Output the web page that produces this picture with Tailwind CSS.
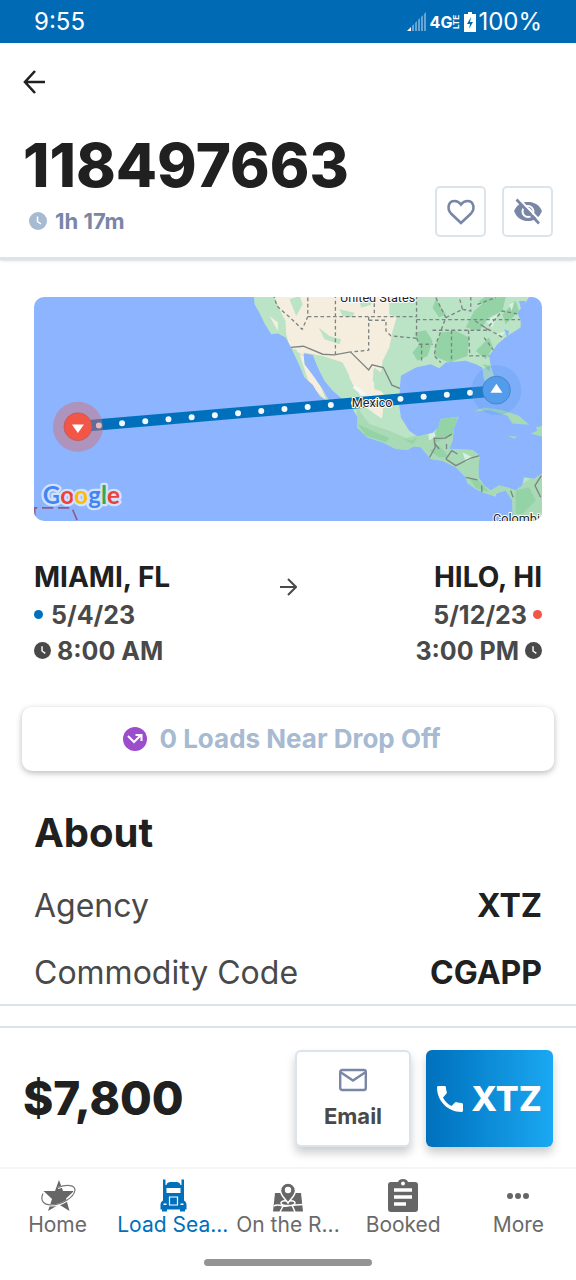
<!DOCTYPE html>
<html lang="en">
<head>
<meta charset="UTF-8" />
<meta name="viewport" content="width=device-width, initial-scale=1.0" />
<title>Load 118497663</title>
<script src="https://cdn.jsdelivr.net/npm/@tailwindcss/browser@4"></script>
</head>
<body class="flex min-h-screen flex-col bg-white font-['Inter',sans-serif] text-[#202020]">

<!-- Status bar -->
<div class="flex h-[43px] items-center justify-between bg-[#016ab5] px-[34px] text-white">
<span class="text-[24px]">9:55</span>
<div class="flex items-center">
<svg class="mr-1 h-5 w-[19px]" viewBox="0 0 19 20" fill="#fff">
<path d="M0 19 L4 15 V19Z" />
<path opacity=".4" d="M5 14l2-2v7H5zM8 11l2-2v10H8zM11 8l2-2v13h-2zM14 5l2-2v16h-2zM17 2l2-2v19h-2z" />
</svg>
<span class="text-base font-bold">4G</span>
<span class="rotate-180 text-[8px] leading-none font-bold [writing-mode:vertical-rl]">LTE</span>
<svg class="mr-[2px] ml-1 h-5 w-3" viewBox="0 0 12 20">
<path fill="#fff" d="M4 0h4v2h4v18H0V2h4z" />
<path fill="#016ab5" d="M7 5L3 12h3l-1 5 4-7H6z" />
</svg>
<span class="text-[24px]">100%</span>
</div>
</div>

<!-- Load header -->
<header class="border-b-3 border-[#dce4eb] px-[23px] pt-[26px] pb-5 shadow-sm">
<button class="block" aria-label="Back">
<svg class="h-[26px] w-[22px]" viewBox="0 0 22 26" fill="none" stroke="#202020" stroke-width="2.6"><path d="M12 2L2 13l10 11M2 13h20" /></svg>
</button>
<div class="flex items-end justify-between">
<div>
<h1 class="mt-[34px] text-[60px] leading-[72px] font-extrabold">118497663</h1>
<p class="mt-[6px] mb-[2px] flex items-center gap-2 pl-[6px] text-[22px] leading-7 font-bold text-[#7a86a5]">
<svg class="h-[18px] w-[18px]" viewBox="0 0 18 18"><circle cx="9" cy="9" r="9" fill="#a6bad1" /><path d="M8.500 4.500V9.500L12 12" fill="none" stroke="#fff" stroke-width="1.500" /></svg>
1h 17m
</p>
</div>
<div class="flex gap-4">
<button class="flex h-[51px] w-[51px] items-center justify-center rounded-[5px] border-2 border-[#dce4eb]" aria-label="Save load">
<svg class="h-[28px] w-[30px]" viewBox="0 0 30 28" fill="none" stroke="#7a86a5" stroke-width="2.600"><path d="M15 25L5 15.500C.5 10.500 2.500 3 8.500 3 11.500 3 13.500 4.500 15 6.500 16.500 4.500 18.500 3 21.500 3 27.500 3 29.500 10.500 25 15.500Z" /></svg>
</button>
<button class="flex h-[51px] w-[51px] items-center justify-center rounded-[5px] border-2 border-[#dce4eb]" aria-label="Hide load">
<svg class="h-[28px] w-[30px]" viewBox="0 0 30 28">
<path fill="#7a86a5" d="M1 13C4 6.500 9 4 15 4s11 2.500 14 9c-3 7.500-8 10-14 10S4 20.500 1 13Z" />
<circle cx="15" cy="13.500" r="5.500" fill="#7a86a5" stroke="#fff" stroke-width="2" />
<path d="M15 10.500a3.500 3.500 0 0 1 3.500 3.500" fill="none" stroke="#fff" stroke-width="1.200" />
<path d="M5.500.5L28.500 24" stroke="#fff" stroke-width="2" />
<path d="M3.500 1.500L26 25.500" stroke="#7a86a5" stroke-width="2.600" />
</svg>
</button>
</div>
</div>
</header>

<main class="flex-1 border-b-2 border-[#dce4eb] pt-[37px]">
<!-- Route map -->
<div class="mx-[34px] overflow-hidden rounded-[10px] bg-[#8cb4ff]">
<svg class="block w-full" viewBox="0 0 1527 672" role="img" aria-label="Route map">
<g transform="translate(768 -38)">
<clipPath id="land">
<path d="M-108 30L-105 60-88 90-75 118-55 150-35 148-12 160 0 180 12 205 30 245 45 280 70 302 92 338 120 352 100 315 75 280 45 240 42 207 70 212 85 250 105 290 130 320 165 350 190 375 205 400 203 430 235 460 280 475 320 495 355 497 375 487 395 490 425 525 460 530 500 550 530 580 535 598 560 615 580 625 620 638 622 628 650 620 670 650 672 720H780V568L757 570 735 585 705 580 700 605 680 620 660 612 630 605 605 620 585 605 568 580V545L572 515 550 498 480 495 490 470 495 430 508 398 455 405 447 430 430 447 385 457 360 440 335 400 330 365 332 310 335 275 380 250 425 240 450 252 470 235 530 230 560 240 580 250 583 280 595 310H615L618 285 605 245 600 215 625 180 655 155 695 130V110L685 85 710 55 725 30Z" />
</clipPath>
<g clip-path="url(#land)">
<path fill="#bbe3c6" d="M-120 20H800V720H-120Z" />
<path fill="#f5eedf" d="M-48 30L-30 75-12 110-10 150 0 185 20 200 60 225 30 210 60 300 110 350 95 310 50 240 45 205 100 215 160 235 180 275 180 310 240 340 262 370 250 385 278 403 283 330 250 290 255 250 275 265 280 230 300 190 310 140 322 100 300 90 300 30ZM-60 95L-35 140-35 115Z" />
<path fill="#a8dab5" d="M203 370L240 420 300 440 350 462 400 450 470 440 500 390 520 480 580 500 580 600 700 600 760 560V720H660L600 650 420 540 200 480Z" />
<path fill="#93d3a6" d="M375 145L410 138 430 170 415 215 385 230 370 205 390 180ZM455 145L500 140 540 160 535 215 480 235 435 215 440 180ZM555 80L600 40 650 38 640 80 600 100 570 140 530 130ZM560 200L600 160 612 190 590 225ZM640 90L680 50 690 80 650 120ZM450 405L505 398 495 450 430 480ZM680 620L720 610 740 650 700 690 680 690ZM570 50L600 30 620 55 590 75ZM440 45L470 90 450 100 430 70Z" />
<path fill="#bbe3c6" d="M110 222L150 232 185 290 205 330 165 340 120 290ZM150 75L195 85 190 100 160 95ZM88 130L120 155 155 165 150 180 105 165ZM0 45L30 35 40 60 20 95ZM210 45L250 40 245 62 215 70ZM5 195L22 225 32 220 20 195ZM252 255L275 270 270 310 290 325 255 315Z" />
<path fill="#f5eedf" d="M195 300L230 305 285 345 278 403 230 370Z" />
<path fill="#93d3a6" d="M205 420L260 445 300 462 290 475 230 455ZM340 462L365 470 385 460 370 480ZM420 500L450 485 480 520 450 520ZM540 580L570 590 600 625 560 612ZM580 240L605 245 600 262Z" />
<path fill="#d5f0dc" d="M410 400L420 470 440 455ZM590 110L625 90 610 130ZM660 60L675 55 668 80ZM520 505L550 520 530 535ZM620 150L650 140 640 155Z" />
<g fill="none" stroke="#7d8584" stroke-width="4">
<path stroke-dasharray="11 8" d="M-48 30L-38 65-10 90 0 98 38 135 45 120 55 97 55 30M138 30V210M55 97H382V30M255 38V97M238 97V198L185 203M238 108H290V140L305 155 382 162V97M382 106H695M382 162L390 180H430M397 180V235M440 40L470 100 440 180 435 215 455 235M430 138H600L555 108M487 138V235M538 138L542 215H600M580 125L650 165M470 100L520 75 510 38M520 75L545 80 545 38M600 125L640 80 690 90M585 160L615 200M565 60L620 40" />
<path d="M-5 190L42 186 100 210 135 212 183 203 238 257 248 242 282 250 308 303 335 314M420 522L438 490 435 463 468 462 488 450M438 480L450 495M472 480V495M470 525L488 500 505 510M470 525L500 545 545 522 572 515M530 580L565 588M578 605V630M665 620L672 640M757 575L738 605 755 640" />
</g>
</g>
<path fill="#a8dab5" d="M555 382L585 370 640 378 690 395 720 422 670 418 655 395 600 378ZM655 455L685 458 675 463ZM725 448L745 440 740 430 760 425V458Z" />
<path fill="#8cb4ff" d="M660 140L645 135 655 160ZM690 50H710L700 90Z" />
</g>
<!-- Route line -->
<path d="M130 390L1388 282" stroke="#0070bc" stroke-width="34" />
<path d="M195 386L1320 287" stroke="#f2f7fc" stroke-width="18" stroke-linecap="round" stroke-dasharray="0 70" fill="none" />
<path fill="#f4f7f7" d="M958 272l10-6 30 24-10 6z" />
<circle cx="132" cy="390" r="75" fill="#d86a6a" fill-opacity=".45" />
<circle cx="132" cy="390" r="42" fill="#f15646" stroke="#b25a60" stroke-width="2" />
<path fill="#fff" d="M114 383h36l-18 26z" />
<circle cx="1390" cy="280" r="75" fill="#5c9eea" fill-opacity=".3" />
<circle cx="1390" cy="280" r="42" fill="#529ceb" stroke="#3678bd" stroke-width="2" />
<path fill="#fff" d="M1372 288h36l-18-27z" />
<g font-family="Roboto, sans-serif" font-size="38" fill="#222" stroke="#fff" stroke-width="6" stroke-linejoin="round" paint-order="stroke">
<text x="920" y="16">United States</text>
<text x="955" y="330">Mexico</text>
<text x="1380" y="680">Colombi</text>
</g>
<path d="M2 660V634H114L130 672" fill="none" stroke="#8c5c8b" stroke-width="5" stroke-dasharray="34 14" />
<text x="26" y="621" font-family="Lato, sans-serif" font-size="73" font-weight="700" stroke="#d3e2fc" stroke-width="14" stroke-linejoin="round" paint-order="stroke"><tspan fill="#4285f4">G</tspan><tspan fill="#ea4335">o</tspan><tspan fill="#fbbc04">o</tspan><tspan fill="#4285f4">g</tspan><tspan fill="#34a853">l</tspan><tspan fill="#ea4335">e</tspan></text>
</svg>
</div>

<!-- Pickup and drop off -->
<section class="mx-[34px] mt-9 flex text-[25px] leading-9 font-bold text-[#494949]">
<div class="flex-1">
<h2 class="text-[28px] leading-10 text-[#202020]">MIAMI, FL</h2>
<p class="flex items-center gap-2"><span class="h-[9px] w-[9px] rounded-full bg-[#0070bc]"></span>5/4/23</p>
<p class="flex items-center gap-[6px]">
<svg class="h-[17px] w-[17px]" viewBox="0 0 18 18"><circle cx="9" cy="9" r="9" fill="#494949" /><path d="M8.500 4.500V9.500L12 12" fill="none" stroke="#fff" stroke-width="1.500" /></svg>
8:00 AM
</p>
</div>
<svg class="mt-5 h-5 w-[17px]" viewBox="0 0 17 20" fill="none" stroke="#494949" stroke-width="2"><path d="M8 2l8 8-8 8M0 10h16" /></svg>
<div class="flex flex-1 flex-col items-end">
<h2 class="text-[28px] leading-10 text-[#202020]">HILO, HI</h2>
<p class="flex items-center gap-[6px]">5/12/23<span class="h-[9px] w-[9px] rounded-full bg-[#f15646]"></span></p>
<p class="flex items-center gap-[6px]">
3:00 PM
<svg class="h-[17px] w-[17px]" viewBox="0 0 18 18"><circle cx="9" cy="9" r="9" fill="#494949" /><path d="M8.500 4.500V9.500L12 12" fill="none" stroke="#fff" stroke-width="1.500" /></svg>
</p>
</div>
</section>

<div class="mx-[22px] mt-[38px]">
<button class="flex h-16 w-full items-center justify-center gap-3 rounded-[10px] bg-white pr-3 text-[26px] font-bold text-[#a6bad1] shadow-[0_2px_6px_rgba(0,0,0,0.28)]">
<svg class="h-6 w-6" viewBox="0 0 24 24"><circle cx="12" cy="12" r="12" fill="#9c4dcc" /><path d="M5 9l6 6 7-7M12.500 8H18.500V14" fill="none" stroke="#fff" stroke-width="2" /></svg>
0 Loads Near Drop Off
</button>
</div>

<!-- About -->
<section class="mx-[34px] mt-9">
<h2 class="text-[40px] leading-[52px] font-bold">About</h2>
<dl class="mt-4 flex flex-col gap-[6px] text-[32px] leading-[61px]">
<div class="flex justify-between"><dt class="text-[#494949]">Agency</dt><dd class="font-bold">XTZ</dd></div>
<div class="flex justify-between"><dt class="text-[#494949]">Commodity Code</dt><dd class="font-bold">CGAPP</dd></div>
</dl>
</section>
</main>

<!-- Price and contact -->
<section class="mt-5 flex items-center gap-[15px] border-t-2 border-[#dce4eb] px-[23px] pt-[22px] pb-5">
<p class="flex-1 text-[46px] font-extrabold">$7,800</p>
<button class="flex h-[97px] w-[116px] flex-col items-center justify-center gap-2 rounded-[6px] border-2 border-[#dce4eb] bg-white pt-1 text-[22px] font-bold text-[#494949] shadow-[0_6px_10px_rgba(0,0,0,0.2)]">
<svg class="h-6 w-7" viewBox="0 0 28 24" fill="none" stroke="#7a86a5" stroke-width="2.400"><rect x="1.200" y="2" width="25.600" height="20" rx="2" /><path d="M2 4.500l12 8 12-8" /></svg>
Email
</button>
<button class="flex h-[97px] w-[127px] items-center justify-center gap-2 rounded-[6px] bg-linear-to-r from-[#0070bc] to-[#1ba8f2] text-[34px] font-extrabold text-white shadow-[0_6px_10px_rgba(0,0,0,0.2)]">
<svg class="h-[26px] w-[26px]" viewBox="0 0 26 26" fill="#fff"><path d="M1.500 0H7.500C8.300 0 8.800.5 8.900 1.300c.1 1.800.4 3.400.9 4.900.2.600 0 1.200-.4 1.600L6 11.500c2 4 4.700 6.500 8.500 8.600l3.500-3.500c.4-.4 1-.6 1.600-.4 1.600.5 3.200.8 5 .9.800.1 1.400.6 1.400 1.400v6c0 .9-.6 1.500-1.400 1.500C11 26 0 15 0 1.500 0 .7.600 0 1.500 0Z" /></svg>
XTZ
</button>
</section>

<!-- Tab bar -->
<nav class="grid grid-cols-5 border-t-2 border-[#f5f5f5] pt-2 text-center text-[21px] leading-6 text-[#6a6a6a]">
<a href="#" class="flex flex-col items-center">
<svg class="h-9 w-9" viewBox="0 0 36 36">
<path fill="#666" d="M19 3L23 14H34L26 21.500 29.500 34 19 27.500 8 34 12 22 3.500 14H15Z" />
<path d="M18 11C27 7.500 34.500 8.500 34.500 13.500 34 21 22 28.500 11 28.500 3 28.500 0 24 3 17" fill="none" stroke="#fff" stroke-width="2" />
<path d="M18 10.500C27 7 35 8 35 13 34 20.500 22 28 11 28 3 28 0 23 3 16.500" fill="none" stroke="#777" stroke-width="1.200" />
</svg>
Home
</a>
<a href="#" class="flex flex-col items-center whitespace-nowrap text-[#0070bc]">
<svg class="h-9 w-9" viewBox="0 0 36 36">
<path fill="#0070bc" d="M8 2.500h2.500V8H11.500C12 5.500 13.500 5 18.500 5S25 5.500 25.500 8H26.500V2.500H29V23.500C31 24.500 31.500 26.500 31.500 28V32.500H30V34.500H25V32.500H12V34.500H7V32.500H5.500V28C5.500 26.500 6 24.500 8 23.500Z" />
<path fill="#fff" d="M11.500 11h14v5h-14zM8.500 26.500h3v1.500h-3zM25.500 26.500h3v1.500h-3z" />
<path d="M14.500 20h8v8h-8z" fill="none" stroke="#fff" stroke-width="1.200" />
</svg>
Load Sea...
</a>
<a href="#" class="flex flex-col items-center whitespace-nowrap">
<svg class="h-9 w-9" viewBox="0 0 36 36">
<path fill="#666" d="M5 16H31L33 34.500H3Z" />
<path d="M4 29C9 26 13 31 19 28.500L33 27.500M10 35L13 29M25 35L22 28" fill="none" stroke="#fff" stroke-width="1.500" />
<ellipse cx="18" cy="26" rx="7" ry="2.500" fill="#666" stroke="#fff" stroke-width="1.500" />
<path d="M18 6a7.500 7.500 0 0 0-7.500 7.500c0 5 4 7.500 7.500 12.500 3.500-5 7.500-7.500 7.500-12.500A7.500 7.500 0 0 0 18 6Z" fill="#666" stroke="#fff" stroke-width="1.500" />
<circle cx="18" cy="13" r="3.200" fill="#fff" />
</svg>
On the R...
</a>
<a href="#" class="flex flex-col items-center">
<svg class="h-9 w-9" viewBox="0 0 36 36">
<path fill="#666" d="M6 5H13C13.500 3 15.500 2 18 2S22.500 3 23 5H30Q33 5 33 8V32Q33 35 30 35H6Q3 35 3 32V8Q3 5 6 5Z" />
<circle cx="18" cy="6.500" r="2" fill="#fff" />
<path d="M9 13h18M9 20h18M9 27h12" stroke="#fff" stroke-width="3.500" />
</svg>
Booked
</a>
<a href="#" class="flex flex-col items-center">
<svg class="h-9 w-9" viewBox="0 0 36 36" fill="#666"><circle cx="10" cy="19" r="3" /><circle cx="18" cy="19" r="3" /><circle cx="26" cy="19" r="3" /></svg>
More
</a>
</nav>
<div class="mx-auto mt-[22px] mb-[14px] h-[7px] w-[168px] rounded-full bg-[#949494]"></div>

</body>
</html>
